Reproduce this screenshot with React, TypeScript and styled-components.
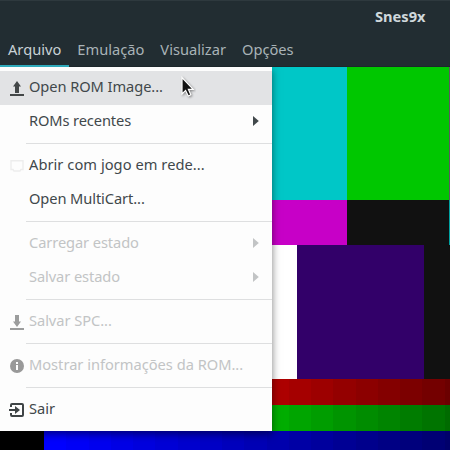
import React from "react";
import styled, { createGlobalStyle } from "styled-components";

const GlobalStyle = createGlobalStyle`
  * { box-sizing: border-box; }
  body { margin: 0; overflow: hidden; background: #000; font-family: "Noto Sans", sans-serif; }
`;

const Window = styled.main`
  position: relative;
  width: 450px;
  height: 450px;
  overflow: hidden;
  display: flex;
  flex-direction: column;
  font-size: 14.67px;
`;

const Header = styled.header`
  height: 67px;
  flex: none;
  background: #222d32;
  border-top: 1px solid #2e393e;
  border-bottom: 1px solid #1d272b;
`;

const TitleBar = styled.div`
  height: 32px;
  padding: 0 24.5px 2px 0;
  display: flex;
  align-items: center;
  justify-content: flex-end;
  color: #cfd8dc;
  font-size: 14.67px;
  font-weight: 700;
`;

const MenuBar = styled.nav`
  height: 33px;
  display: flex;
`;

const MenuBarItem = styled.div<{ $active?: boolean }>`
  height: 34px;
  padding: 0 8px;
  line-height: 32px;
  white-space: nowrap;
  color: ${(p) => (p.$active ? "#c9d2d6" : "#a9b3b7")};
  box-shadow: ${(p) => (p.$active ? "inset 0 -2px #2eaabb" : "none")};
`;

const Screen = styled.section`
  width: 450px;
  flex: 1;
  display: flex;
  flex-direction: column;
`;

const Band = styled.div<{ $height: number }>`
  height: ${(p) => p.$height}px;
  flex: none;
  display: flex;
`;

const Block = styled.div<{ $width: number; $color: string }>`
  width: ${(p) => p.$width}px;
  flex: none;
  background: ${(p) => p.$color};
`;

const Ramp = styled.div`
  display: grid;
  grid-template-columns: repeat(19, 22.25px);
`;

const Step = styled.div<{ $color: string }>`
  background: ${(p) => p.$color};
`;

const Menu = styled.div`
  position: absolute;
  left: 0;
  top: 67px;
  width: 272px;
  height: 364px;
  padding: 4px 0;
  background: #fdfdfd;
  box-shadow: 0 3px 8px rgba(0, 0, 0, 0.5);
  clip-path: inset(0 -20px -20px 0);
`;

const Row = styled.div<{ $hover?: boolean; $disabled?: boolean }>`
  height: 34px;
  padding: 0 13px 0 9px;
  display: flex;
  align-items: center;
  color: ${(p) => (p.$disabled ? "#c2c4c5" : "#41484b")};
  background: ${(p) => (p.$hover ? "#e2e3e5" : "transparent")};
`;

const IconSlot = styled.span`
  width: 20px;
  height: 16px;
  flex: none;
  svg { display: block; }
`;

const Label = styled.span<{ $tracking?: number }>`
  flex: 1;
  line-height: 20px;
  margin-top: -4px;
  letter-spacing: ${(p) => p.$tracking ?? 0}px;
  white-space: nowrap;
`;

const Separator = styled.div`
  height: 10px;
  padding: 4px 0 5px 26px;
  &::after { content: ""; display: block; height: 1px; background: #dedfe0; }
`;

const Pointer = styled.svg`
  position: absolute;
  left: 178px;
  top: 74px;
`;

type IconName = "open" | "net" | "save" | "info" | "exit";

function Icon({ name }: { name: IconName }) {
  return (
    <svg width="16" height="16" viewBox="0 0 16 16">
      {name === "open" && <path fill="#434748" d="M8 1 12 6.5H10V13H6V6.5H4ZM1 14H15V16H1Z" />}
      {name === "net" && <path fill="none" stroke="#ededed" strokeWidth="1.4" d="M2 2.7H14V11.5H12L11 13H5L4 11.5H2Z" />}
      {name === "save" && <path fill="#9c9d9d" d="M6 1H10V7.5H12L8 13 4 7.5H6ZM1 14H15V16H1Z" />}
      {name === "info" && (
        <>
          <circle cx="8" cy="8" r="7" fill="#999" />
          <path fill="#fdfdfd" d="M7 4H9V6H7ZM7 7H9V12H7Z" />
        </>
      )}
      {name === "exit" && (
        <>
          <path fill="none" stroke="#3f4446" strokeWidth="2" d="M2 5V3Q2 2 3 2H13Q14 2 14 3V13Q14 14 13 14H3Q2 14 2 13V11" />
          <path fill="#3f4446" d="M0 7H6V4L11 8 6 12V9H0Z" />
        </>
      )}
    </svg>
  );
}

function Arrow() {
  return (
    <svg width="6" height="12" viewBox="0 0 6 12">
      <path fill="currentColor" d="M0 0 5.8 5 0 10Z" />
    </svg>
  );
}

interface Entry {
  label: string;
  icon?: IconName;
  submenu?: boolean;
  disabled?: boolean;
  hover?: boolean;
  tracking?: number;
}

const groups: Entry[][] = [
  [
    { label: "Open ROM Image...", icon: "open", hover: true, tracking: -0.08 },
    { label: "ROMs recentes", submenu: true, tracking: -0.12 },
  ],
  [
    { label: "Abrir com jogo em rede...", icon: "net", tracking: 0.04 },
    { label: "Open MultiCart...", tracking: -0.1 },
  ],
  [
    { label: "Carregar estado", submenu: true, disabled: true, tracking: -0.1 },
    { label: "Salvar estado", submenu: true, disabled: true, tracking: -0.1 },
  ],
  [{ label: "Salvar SPC...", icon: "save", disabled: true, tracking: -0.06 }],
  [{ label: "Mostrar informações da ROM...", icon: "info", disabled: true, tracking: -0.02 }],
  [{ label: "Sair", icon: "exit" }],
];

const ramps: { height: number; color: (v: number) => string }[] = [
  { height: 26, color: (v) => `rgb(${v}, 0, 0)` },
  { height: 26, color: (v) => `rgb(0, ${v}, 0)` },
  { height: 19, color: (v) => `rgb(0, 0, ${v})` },
];

export default function App() {
  return (
    <Window>
      <GlobalStyle />
      <Header>
        <TitleBar>Snes9x</TitleBar>
        <MenuBar>
          <MenuBarItem $active>Arquivo</MenuBarItem>
          <MenuBarItem>Emulação</MenuBarItem>
          <MenuBarItem>Visualizar</MenuBarItem>
          <MenuBarItem>Opções</MenuBarItem>
        </MenuBar>
      </Header>
      <Screen>
        <Band $height={133}>
          <Block $width={347} $color="#00c7c7" />
          <Block $width={102} $color="#00c700" />
          <Block $width={1} $color="#5d5562" />
        </Band>
        <Band $height={45}>
          <Block $width={347} $color="#c700c7" />
          <Block $width={102} $color="#111" />
          <Block $width={1} $color="#00a0a0" />
        </Band>
        <Band $height={134}>
          <Block $width={297} $color="#fff" />
          <Block $width={127} $color="#320069" />
          <Block $width={26} $color="#111" />
        </Band>
        {ramps.map((ramp, i) => (
          <Band key={i} $height={ramp.height}>
            <Block $width={44} $color="#000" />
            <Ramp>
              {Array.from({ length: 19 }, (_, n) => (
                <Step key={n} $color={ramp.color(Math.round(255 - n * 8.2))} />
              ))}
            </Ramp>
          </Band>
        ))}
      </Screen>
      <Menu>
        {groups.map((group, g) => (
          <React.Fragment key={g}>
            {g > 0 && <Separator />}
            {group.map((e) => (
              <Row key={e.label} $hover={e.hover} $disabled={e.disabled}>
                <IconSlot>{e.icon && <Icon name={e.icon} />}</IconSlot>
                <Label $tracking={e.tracking}>{e.label}</Label>
                {e.submenu && <Arrow />}
              </Row>
            ))}
          </React.Fragment>
        ))}
      </Menu>
      <Pointer width="18" height="26" viewBox="0 0 18 26">
        <path
          d="M4 3.5V20L7.6 16.4 10.3 22 12.8 20.8 10.4 15.3H15.2Z"
          fill="#111"
          stroke="#fff"
          strokeWidth="1.2"
          filter="drop-shadow(1px 1px 1px rgba(0,0,0,.4))"
        />
      </Pointer>
    </Window>
  );
}
